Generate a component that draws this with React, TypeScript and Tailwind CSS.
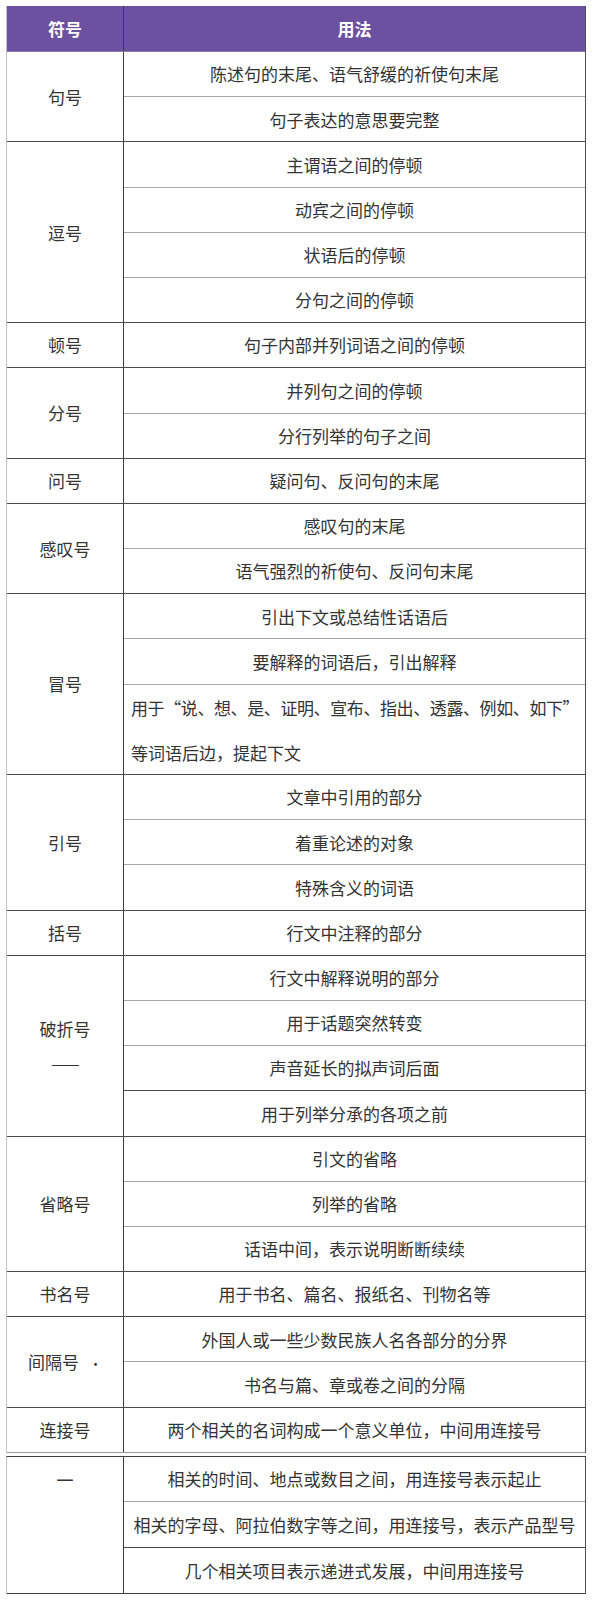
import React from 'react';

type Row = { text: string; second?: string; line?: 'dark' | 'light' };
type Group = { name: string; sub?: string; rows: Row[] };

const groups: Group[] = [
  { name: '句号', rows: [{ text: '陈述句的末尾、语气舒缓的祈使句末尾' }, { text: '句子表达的意思要完整' }] },
  {
    name: '逗号',
    rows: [{ text: '主谓语之间的停顿' }, { text: '动宾之间的停顿' }, { text: '状语后的停顿' }, { text: '分句之间的停顿' }],
  },
  { name: '顿号', rows: [{ text: '句子内部并列词语之间的停顿' }] },
  { name: '分号', rows: [{ text: '并列句之间的停顿' }, { text: '分行列举的句子之间' }] },
  { name: '问号', rows: [{ text: '疑问句、反问句的末尾' }] },
  { name: '感叹号', rows: [{ text: '感叹句的末尾' }, { text: '语气强烈的祈使句、反问句末尾' }] },
  {
    name: '冒号',
    rows: [
      { text: '引出下文或总结性话语后' },
      { text: '要解释的词语后，引出解释' },
      { text: '用于“说、想、是、证明、宣布、指出、透露、例如、如下”', second: '等词语后边，提起下文' },
    ],
  },
  { name: '引号', rows: [{ text: '文章中引用的部分' }, { text: '着重论述的对象' }, { text: '特殊含义的词语' }] },
  { name: '括号', rows: [{ text: '行文中注释的部分' }] },
  {
    name: '破折号',
    sub: '——',
    rows: [
      { text: '行文中解释说明的部分' },
      { text: '用于话题突然转变' },
      { text: '声音延长的拟声词后面', line: 'dark' },
      { text: '用于列举分承的各项之前' },
    ],
  },
  { name: '省略号', rows: [{ text: '引文的省略' }, { text: '列举的省略' }, { text: '话语中间，表示说明断断续续' }] },
  { name: '书名号', rows: [{ text: '用于书名、篇名、报纸名、刊物名等' }] },
  {
    name: '间隔号',
    rows: [{ text: '外国人或一些少数民族人名各部分的分界' }, { text: '书名与篇、章或卷之间的分隔' }],
  },
  { name: '连接号', rows: [{ text: '两个相关的名词构成一个意义单位，中间用连接号' }] },
];

const extra: string[] = [
  '相关的时间、地点或数目之间，用连接号表示起止',
  '相关的字母、阿拉伯数字等之间，用连接号，表示产品型号',
  '几个相关项目表示递进式发展，中间用连接号',
];

function SubRow({ row, last }: { row: Row; last: boolean }) {
  // the group's bottom line is drawn by the group, so the last row is 1px shorter
  const border = last ? '' : row.line === 'dark' ? 'border-b border-[#4a4a4a]' : 'border-b border-[#a6a6a6]';
  if (row.second) {
    return (
      <div
        className={`${last ? 'h-[89.4px]' : 'h-[90.4px]'} whitespace-nowrap pl-[7px] text-left leading-[45.2px] ${border}`}
      >
        <div className="tracking-[-0.4px]">{row.text}</div>
        <div>{row.second}</div>
      </div>
    );
  }
  return (
    <div className={`flex ${last ? 'h-[44.2px]' : 'h-[45.2px]'} items-center justify-center text-center ${border}`}>
      {row.text}
    </div>
  );
}

export default function App() {
  return (
    <div className="bg-white px-[6px] pt-[6px] pb-[6px] font-['Noto_Sans_CJK_SC','Noto_Sans',sans-serif] text-[17px] text-[#333]">
      <div className="w-[580px] border-l border-r border-l-[#c4c4c4] border-r-[#505050]">
        {/* header */}
        <div className="flex h-[46px] border-b border-[#8a7aa8] bg-[#6c51a0] font-bold text-white">
          <div className="flex w-[117px] items-center justify-center border-r border-[#3a3a3a]">符号</div>
          <div className="flex flex-1 items-center justify-center">用法</div>
        </div>

        {groups.map((g, gi) => (
          <div
            key={g.name}
            className={`flex ${gi === groups.length - 1 ? 'border-b border-[#9a9a9a]' : 'border-b border-[#4a4a4a]'}`}
          >
            <div className="flex w-[117px] shrink-0 flex-col items-center justify-center border-r border-[#3a3a3a]">
              {g.name === '间隔号' ? (
                <span>
                  间隔号<span className="ml-[10px] text-[13px]">·</span>
                </span>
              ) : (
                <span>{g.name}</span>
              )}
              {g.sub && <span className="mt-[9px] tracking-[-1px]">{g.sub}</span>}
            </div>
            <div className="flex-1">
              {g.rows.map((r, ri) => (
                <SubRow key={ri} row={r} last={ri === g.rows.length - 1} />
              ))}
            </div>
          </div>
        ))}
      </div>

      <div className="mt-[3px] flex w-[580px] border-t border-b border-l border-r border-t-[#404040] border-b-[#404040] border-l-[#c4c4c4] border-r-[#505050]">
        <div className="flex w-[117px] shrink-0 justify-center border-r border-[#3a3a3a] pt-[10px]">
          <span>一</span>
        </div>
        <div className="flex-1">
          {extra.map((t, i) => (
            <div
              key={i}
              className={`flex h-[45.4px] items-center justify-center whitespace-nowrap ${
                i === 0 ? 'border-b border-[#a6a6a6]' : i === 1 ? 'border-b border-[#4a4a4a]' : ''
              }`}
            >
              {t}
            </div>
          ))}
        </div>
      </div>
    </div>
  );
}
